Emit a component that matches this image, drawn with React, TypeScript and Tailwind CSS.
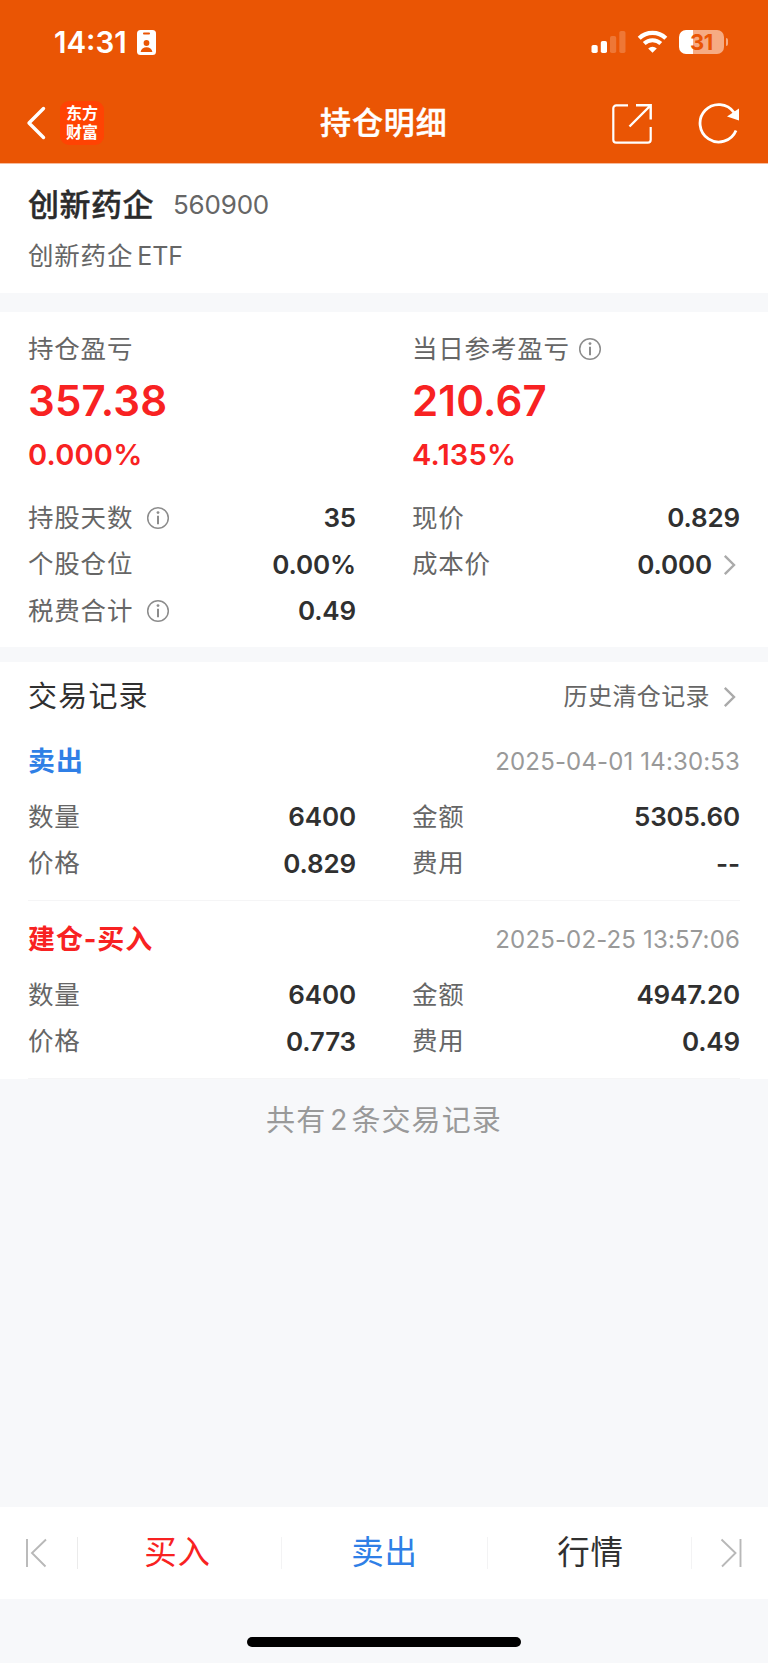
import type { ReactNode } from "react";

type Trade = {
  title: string;
  color: string;
  time: string;
  count: string;
  amount: string;
  price: string;
  fee: string;
};

const trades: Trade[] = [
  {
    title: "卖出",
    color: "text-[#2f7fe6]",
    time: "2025-04-01 14:30:53",
    count: "6400",
    amount: "5305.60",
    price: "0.829",
    fee: "--",
  },
  {
    title: "建仓-买入",
    color: "text-[#f82222]",
    time: "2025-02-25 13:57:06",
    count: "6400",
    amount: "4947.20",
    price: "0.773",
    fee: "0.49",
  },
];

const InfoIcon = ({ className = "" }: { className?: string }) => (
  <svg className={className} width="24" height="24" viewBox="0 0 24 24" fill="none" stroke="#8c8c8c">
    <circle cx="12" cy="12" r="10.3" strokeWidth="1.5" />
    <path d="M12 9.8v8.4" strokeWidth="2" />
    <circle cx="12" cy="6.6" r="1.4" fill="#8c8c8c" stroke="none" />
  </svg>
);

const Chevron = () => (
  <svg width="14" height="22" viewBox="0 0 14 22" fill="none" stroke="#aaaaaa" strokeWidth="2.4">
    <path d="M1.8 1.8 11 11l-9.2 9.2" />
  </svg>
);

const Row = ({
  label,
  value,
  info = false,
  arrow = false,
}: {
  label: string;
  value: string;
  info?: boolean;
  arrow?: boolean;
}) => (
  <div className="flex h-[46.5px] w-[328px] items-center justify-between">
    <div className="flex items-center">
      <span className="pb-[2px] text-[25.5px] tracking-[0.8px] text-[#666]">{label}</span>
      {info && <InfoIcon className="ml-[12.5px]" />}
    </div>
    <div className="flex items-center">
      <span className="text-[26px] font-semibold tracking-[-0.15px] text-[#303030]">{value}</span>
      {arrow && (
        <span className="mr-[3px] ml-[11px]">
          <Chevron />
        </span>
      )}
    </div>
  </div>
);

const Summary = ({ label, value, rate, info = false }: { label: string; value: string; rate: string; info?: boolean }) => (
  <div className="w-[328px]">
    <div className="flex h-[38px] items-center">
      <span className="text-[25.5px] tracking-[0.8px] text-[#666]">{label}</span>
      {info && <InfoIcon className="ml-[8px]" />}
    </div>
    <div className="flex h-[64px] items-center pt-[2px] text-[42px] font-semibold tracking-[0.2px] text-[#f82222]">{value}</div>
    <div className="flex h-[45px] items-center text-[29px] font-semibold tracking-[0.2px] text-[#f82222]">{rate}</div>
  </div>
);

const StatusBar = () => (
  <div className="flex h-[84px] items-center justify-between pr-[40px] pl-[54px]">
    <div className="flex items-center">
      <span className="w-[83px] pt-[2px] text-[29.5px] font-semibold">14:31</span>
      <svg width="19" height="25" viewBox="0 0 19 25">
        <rect width="19" height="25" rx="3.5" fill="#fff" />
        <rect x="6" y="2.6" width="7" height="1.8" rx="0.9" fill="#ea5504" />
        <circle cx="9.5" cy="13" r="2.9" fill="#ea5504" />
        <path d="M3.6 22c.4-3.2 2.9-4.8 5.9-4.8s5.5 1.6 5.9 4.8z" fill="#ea5504" />
      </svg>
    </div>
    <div className="flex items-center">
      <svg width="35" height="24" viewBox="0 0 35 24" fill="#fff">
        <rect x="0.5" y="15" width="6.2" height="8" rx="1.8" />
        <rect x="9.8" y="11" width="6.2" height="12" rx="1.8" />
        <rect x="19" y="6" width="6.2" height="17" rx="1.8" opacity="0.2" />
        <rect x="28.3" y="1" width="6.2" height="22" rx="1.8" opacity="0.2" />
      </svg>
      <svg className="ml-[11px]" width="31" height="24" viewBox="0 0 31 24" fill="none" stroke="#fff">
        <path d="M2.2 8.2a19.2 19.2 0 0 1 26.6 0" strokeWidth="4.3" />
        <path d="M7.2 13.5a12 12 0 0 1 16.6 0" strokeWidth="4" />
        <path d="M15.5 22.8l-4.3-4.3a6.2 6.2 0 0 1 8.6 0z" fill="#fff" stroke="none" />
      </svg>
      <div className="ml-[11px] flex h-[24px] w-[45px] items-center justify-center rounded-[7px] bg-linear-to-r from-white from-31% to-[#f6ab83] to-31% text-[22px] font-bold tracking-[-0.4px] text-[#ea5504]">
        31
      </div>
      <div className="ml-[1.5px] h-[8px] w-[2.5px] rounded-r-full bg-[#f6ab83]" />
    </div>
  </div>
);

const NavBar = () => (
  <div className="flex h-[79px] items-center pr-[28px] pl-[26px]">
    <svg className="-mt-[1px]" width="20" height="34" viewBox="0 0 20 34" fill="none" stroke="#fff" strokeWidth="3.4" strokeLinecap="round" strokeLinejoin="round">
      <path d="M17.5 2.5 3 17l14.5 14.5" />
    </svg>
    <div className="-mt-[2px] ml-[14px] flex h-[44px] w-[44px] flex-col items-center justify-center rounded-[9px] bg-[#ff4303] text-[16px] leading-[18.5px] font-bold">
      <span>东方</span>
      <span>财富</span>
    </div>
    <h1 className="ml-[216px] w-[292px] pb-[2px] text-[31px] font-medium tracking-[0.9px] [-webkit-text-stroke:0.4px_white]">持仓明细</h1>
    <svg width="40" height="40" viewBox="0 0 40 40" fill="none" stroke="#fff" strokeWidth="2.2">
      <path d="M16 1.3H4.3a3 3 0 0 0-3 3v31.4a3 3 0 0 0 3 3h31.4a3 3 0 0 0 3-3V23" />
      <path d="M24 1.3h14.7V15.5M38 2 17.5 22.5" strokeWidth="2.4" />
    </svg>
    <svg className="-mt-[1px] ml-auto" width="42" height="42" viewBox="0 0 42 42" fill="none" stroke="#fff" strokeWidth="2.8">
      <path d="M36 10.5A18.7 18.7 0 1 0 38 28.5" />
      <path d="M41 6.5v12l-12-4z" fill="#fff" stroke="none" />
    </svg>
  </div>
);

const TradeCard = ({ trade }: { trade: Trade }) => (
  <div className="h-[178px] border-b border-[#f5f5f6] pt-[16px]">
    <div className="flex h-[44px] items-center justify-between">
      <span className={`text-[27px] font-bold tracking-[0.9px] ${trade.color}`}>{trade.title}</span>
      <span className="pt-px text-[24px] tracking-[0.15px] text-[#999]">{trade.time}</span>
    </div>
    <div className="mt-[11px] flex flex-wrap justify-between">
      <Row label="数量" value={trade.count} />
      <Row label="金额" value={trade.amount} />
      <Row label="价格" value={trade.price} />
      <Row label="费用" value={trade.fee} />
    </div>
  </div>
);

const Separator = ({ className = "bg-[#f3f3f4]" }: { className?: string }) => (
  <div className={`h-8 w-px shrink-0 ${className}`} />
);

const Tab = ({ children, className }: { children: ReactNode; className: string }) => (
  <div className={`flex justify-center pt-px text-[32.5px] tracking-[0.8px] ${className}`}>{children}</div>
);

const App = () => {
  return (
    <div className="flex h-[1663px] w-[768px] flex-col overflow-hidden bg-[#f7f8fa] font-['Inter','Noto_Sans_CJK_SC',sans-serif] leading-none">
      <header className="h-[163px] shrink-0 bg-[#ea5504] text-white">
        <StatusBar />
        <NavBar />
      </header>

      {/* Security name and code */}
      <section className="h-[130px] shrink-0 border-t border-[#f7bb9b] bg-white px-7 pt-[20px]">
        <div className="flex h-[42px] items-center">
          <span className="pb-px text-[31px] font-medium tracking-[0.5px] text-[#2b2b2b] [-webkit-text-stroke:0.4px_#2b2b2b]">创新药企</span>
          <span className="ml-[19px] text-[26px] tracking-[-0.2px] text-[#666]">560900</span>
        </div>
        <div className="mt-[10px] flex h-10 items-center gap-[4px] text-[25px] text-[#666]">
          <span className="pb-px text-[25.5px] tracking-[0.8px]">创新药企</span>
          <span>ETF</span>
        </div>
      </section>

      {/* Profit and position figures */}
      <section className="mt-[19px] h-[335px] shrink-0 bg-white px-7 pt-[18px]">
        <div className="flex justify-between">
          <Summary label="持仓盈亏" value="357.38" rate="0.000%" />
          <Summary label="当日参考盈亏" value="210.67" rate="4.135%" info />
        </div>
        <div className="mt-[18px] flex justify-between">
          <div>
            <Row label="持股天数" value="35" info />
            <Row label="个股仓位" value="0.00%" />
            <Row label="税费合计" value="0.49" info />
          </div>
          <div>
            <Row label="现价" value="0.829" />
            <Row label="成本价" value="0.000" arrow />
          </div>
        </div>
      </section>

      {/* Trade records */}
      <section className="mt-[15px] h-[417px] shrink-0 bg-white px-7">
        <div className="flex h-[61px] items-center justify-between pt-[8px]">
          <h2 className="text-[29px] tracking-[1.2px] text-[#303030]">交易记录</h2>
          <div className="flex items-center pr-[3px]">
            <span className="mr-[13px] text-[24px] tracking-[0.4px] text-[#666]">历史清仓记录</span>
            <Chevron />
          </div>
        </div>
        {trades.map((trade) => (
          <TradeCard key={trade.time} trade={trade} />
        ))}
      </section>

      <p className="mt-[22px] flex h-[38px] shrink-0 items-center justify-center gap-[4px] text-[29px] tracking-[1.1px] text-[#999]">
        <span>共有</span>
        <span className="text-[28px] tracking-normal">2</span>
        <span>条交易记录</span>
      </p>

      <footer className="mt-auto flex h-[156px] shrink-0 flex-col">
        <nav className="flex h-[92px] shrink-0 items-center bg-white">
          <svg className="ml-[25px]" width="24" height="30" viewBox="0 0 24 30" fill="none" stroke="#b8b8b8" strokeWidth="1.9">
            <path d="M2 1v28M21 1.5 7 15l13.5 13.5" />
          </svg>
          <Separator className="ml-[28px] bg-[#ebebeb]" />
          <Tab className="w-[203px] pr-[4px] text-[#f82222]">买入</Tab>
          <Separator />
          <Tab className="w-[205px] text-[#2f7fe6]">卖出</Tab>
          <Separator />
          <Tab className="w-[203px] pl-[2px] text-[#303030]">行情</Tab>
          <Separator />
          <svg className="ml-[28px]" width="24" height="30" viewBox="0 0 24 30" fill="none" stroke="#b8b8b8" strokeWidth="1.9">
            <path d="M20.5 1v28M1.500 1.5 15.5 15 2 28.5" />
          </svg>
        </nav>
        <div className="mx-auto mt-[38px] h-[10px] w-[274px] rounded-full bg-black" />
      </footer>
    </div>
  );
};

export default App;
